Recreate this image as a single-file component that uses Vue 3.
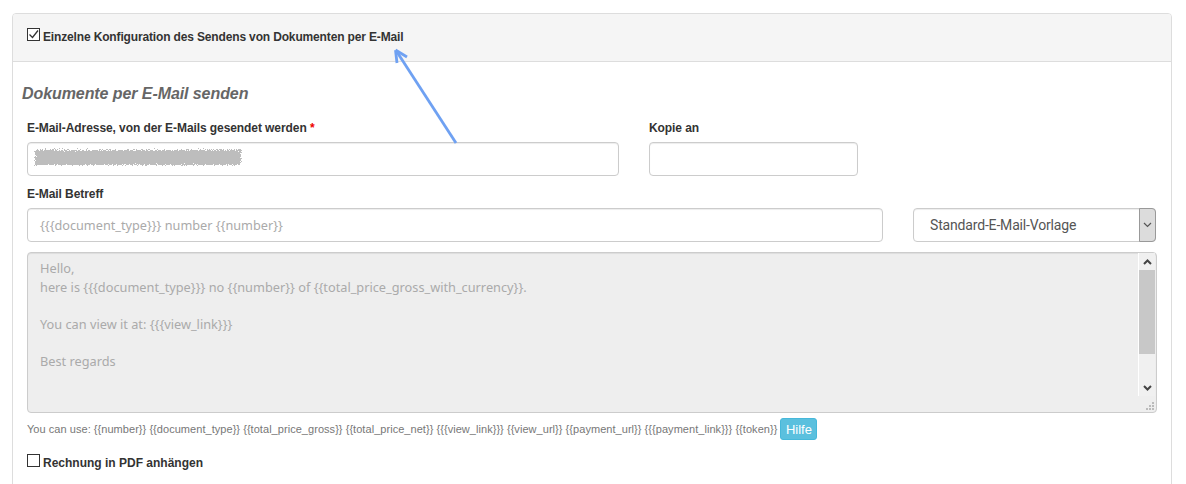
<script setup>
const hints = '{{number}} {{document_type}} {{total_price_gross}} {{total_price_net}} {{{view_link}}} {{view_url}} {{payment_url}} {{{payment_link}}} {{token}}'
const subject = '{{{document_type}}} number {{number}}'
const bodyLines = [
  'Hello,',
  'here is {{{document_type}}} no {{number}} of {{total_price_gross_with_currency}}.',
  '',
  'You can view it at: {{{view_link}}}',
  '',
  'Best regards',
]
</script>

<template>
  <div class="page">
    <section class="panel">
      <header class="panel-head">
        <label class="check-row head-check">
          <span class="box">
            <svg width="13" height="13" viewBox="0 0 13 13">
              <path d="M2.5 6.5 5.5 9.5 11 2.5" fill="none" stroke="#333" stroke-width="1.3" />
            </svg>
          </span>
          <span class="check-text">Einzelne Konfiguration des Sendens von Dokumenten per E-Mail</span>
        </label>
      </header>

      <div class="panel-body">
        <h3 class="title">Dokumente per E-Mail senden</h3>

        <div class="fields">
          <div class="row first">
            <div class="field mail">
              <label>E-Mail-Adresse, von der E-Mails gesendet werden <span class="req">*</span></label>
              <div class="input">
                <svg class="blurred" width="214" height="23" viewBox="0 0 214 23">
                  <filter id="rough" x="-5%" y="-40%" width="110%" height="180%">
                    <feTurbulence type="fractalNoise" baseFrequency="0.9" numOctaves="2" seed="4" />
                    <feDisplacementMap in="SourceGraphic" scale="6" xChannelSelector="R" yChannelSelector="G" />
                  </filter>
                  <rect x="4" y="4" width="206" height="15" fill="#bdbdbd" filter="url(#rough)" />
                </svg>
              </div>
            </div>
            <div class="field copy">
              <label>Kopie an</label>
              <div class="input"></div>
            </div>
          </div>

          <div class="field">
            <label>E-Mail Betreff</label>
            <div class="row second">
              <div class="input subject">{{ subject }}</div>
              <div class="input select">
                <span class="select-text">Standard-E-Mail-Vorlage</span>
                <span class="select-btn">
                  <svg width="9" height="6" viewBox="0 0 9 6">
                    <path d="M1 1 4.5 4.5 8 1" fill="none" stroke="#555" stroke-width="1.2" />
                  </svg>
                </span>
              </div>
            </div>
          </div>

          <div class="textarea">
            <div class="textarea-text">
              <div v-for="(line, i) in bodyLines" :key="i" class="line">{{ line }}</div>
            </div>
            <div class="scrollbar">
              <svg class="arrow" width="9" height="6" viewBox="0 0 9 6">
                <path d="M1 5 4.5 1.5 8 5" fill="none" stroke="#444" stroke-width="2" />
              </svg>
              <div class="thumb"></div>
              <svg class="arrow" width="9" height="6" viewBox="0 0 9 6">
                <path d="M1 1 4.5 4.5 8 1" fill="none" stroke="#444" stroke-width="2" />
              </svg>
            </div>
            <svg class="grip" width="9" height="9" viewBox="0 0 9 9">
              <path d="M6 0h2v2H6zM3 3h2v2H3zM6 3h2v2H6zM0 6h2v2H0zM3 6h2v2H3zM6 6h2v2H6z" fill="#bbb" />
            </svg>
          </div>

          <div class="hint-row">
            <span class="hint">You can use: {{ hints }}</span>
            <button class="help" type="button">Hilfe</button>
          </div>

          <label class="check-row attach">
            <span class="box"></span>
            <span class="check-text">Rechnung in PDF anhängen</span>
          </label>
        </div>
      </div>
    </section>

    <svg class="callout" width="70" height="100" viewBox="0 0 70 100">
      <path d="M65 95 6 4" fill="none" stroke="#6fa1f2" stroke-width="2.8" />
      <path d="M4.5 2 6 15M4.5 2 16 9" fill="none" stroke="#6fa1f2" stroke-width="2.8" />
    </svg>
  </div>
</template>

<style scoped>
.page {
  position: relative;
  height: 484px;
  overflow: hidden;
  padding: 13px 14px 0 12px;
  box-sizing: border-box;
  background: #fff;
  font-family: "Liberation Sans", Arial, sans-serif;
  font-size: 12px;
  color: #333;
}
.panel {
  border: 1px solid #ddd;
  border-radius: 4px;
  height: 520px;
  box-sizing: border-box;
}
.panel-head {
  height: 48px;
  padding-top: 14px;
  padding-left: 14px;
  box-sizing: border-box;
  background: #f5f5f5;
  border-bottom: 1px solid #ddd;
  border-radius: 3px 3px 0 0;
}
.check-row {
  display: flex;
  align-items: flex-start;
  gap: 3px;
  font-weight: bold;
  line-height: 16px;
  color: #333;
}
.check-text {
  padding-top: 1px;
}
.head-check {
  letter-spacing: -.15px;
}
.box {
  width: 13px;
  height: 13px;
  border: 1px solid #333;
  box-sizing: border-box;
  background: #fff;
  display: block;
  position: relative;
}
.box svg {
  position: absolute;
  left: -1px;
  top: -1px;
}
.panel-body {
  padding: 0 14px 0 9px;
}
.title {
  margin: 22px 0 0;
  font-size: 16px;
  line-height: 20px;
  font-style: italic;
  font-weight: bold;
  letter-spacing: -.08px;
  color: #666;
}
.fields {
  padding-left: 5px;
  margin-top: 16px;
}
.row {
  display: flex;
  gap: 30px;
}
label {
  display: block;
}
.field > label {
  font-weight: bold;
  line-height: 16px;
  margin-bottom: 6px;
  letter-spacing: -.08px;
}
.req {
  color: #e00;
}
.input {
  height: 34px;
  box-sizing: border-box;
  border: 1px solid #ccc;
  border-radius: 4px;
  background: #fff;
  box-shadow: inset 0 1px 1px rgba(0, 0, 0, .075);
}
.mail {
  width: 592px;
}
.copy {
  width: 209px;
}
.first {
  margin-bottom: 10px;
}
.mail .input {
  padding: 3px;
}
.blurred {
  display: block;
}
.subject {
  width: 856px;
  padding: 0 12px;
  line-height: 32px;
  font-family: "Noto Sans", sans-serif;
  font-size: 12.7px;
  color: #aaa;
}
.select {
  width: 243px;
  display: flex;
}
.select-text {
  flex: 1;
  padding-left: 16px;
  line-height: 32px;
  font-family: Roboto, sans-serif;
  font-size: 14px;
  letter-spacing: -.17px;
  color: #555;
}
.select-btn {
  width: 17px;
  margin: -1px -1px -1px 0;
  display: flex;
  align-items: center;
  justify-content: center;
  box-sizing: border-box;
  background: #dcdcdc;
  border: 1px solid #999;
  border-radius: 0 4px 4px 0;
}
.textarea {
  position: relative;
  display: flex;
  justify-content: space-between;
  height: 161px;
  margin-top: 10px;
  box-sizing: border-box;
  border: 1px solid #ccc;
  border-radius: 4px;
  background: #eee;
  box-shadow: inset 0 1px 1px rgba(0, 0, 0, .075);
}
.textarea-text {
  padding: 6px 12px;
  font-family: "Noto Sans", sans-serif;
  font-size: 12.75px;
  color: #aaa;
}
.line {
  height: 18.5px;
  line-height: 18.5px;
}
.scrollbar {
  width: 16px;
  height: 143px;
  margin-right: 1px;
  background: #f0f0f0;
  border-left: 1px solid #fff;
  display: flex;
  flex-direction: column;
  align-items: center;
}
.arrow {
  margin: 6px 0 5px;
  flex: none;
}
.thumb {
  width: 16px;
  height: 84px;
  margin-bottom: 25px;
  background: #c8c8c8;
}
.grip {
  position: absolute;
  right: 1px;
  bottom: 1px;
}
.hint-row {
  display: flex;
  align-items: center;
  gap: 3px;
  margin-top: 5px;
}
.hint {
  font-size: 11px;
  letter-spacing: .045px;
  color: #777;
  white-space: nowrap;
}
.help {
  width: 37px;
  height: 22px;
  padding: 0;
  border: 1px solid #46b8da;
  border-radius: 3px;
  background: #5bc0de;
  color: #fff;
  font-family: inherit;
  font-size: 13px;
}
.attach {
  margin-top: 14px;
}
.callout {
  position: absolute;
  left: 391px;
  top: 48px;
}
</style>

<style>
body {
  margin: 0;
}
</style>
